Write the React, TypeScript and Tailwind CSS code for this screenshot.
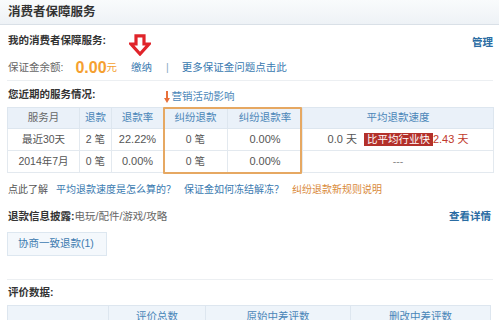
import React from 'react';

const monthRows = [
  { month: '最近30天', refund: '2 笔', rate: '22.22%', dispute: '0 笔', disputeRate: '0.00%', speed: true },
  { month: '2014年7月', refund: '0 笔', rate: '0.00%', dispute: '0 笔', disputeRate: '0.00%', speed: false },
];

function RedArrow() {
  return (
    <svg width="22" height="22" viewBox="0 0 22 22" className="absolute left-[129px] top-[9px]">
      <polygon
        points="7,1.8 15,1.8 15,10 20,10 11,20 2,10 7,10"
        fill="#ffffff"
        stroke="#e0242a"
        strokeWidth="3.2"
        strokeLinejoin="miter"
      />
    </svg>
  );
}

function SmallArrow() {
  return (
    <svg width="6" height="12" viewBox="0 0 6 12" className="mr-[2px]">
      <rect x="2" y="0" width="2" height="8" fill="#e8703a" />
      <polygon points="0,7 6,7 3,12" fill="#e8703a" />
    </svg>
  );
}

export default function App() {
  return (
    <div className="w-[499px] h-[320px] overflow-hidden bg-white text-[10.5px] text-[#666] font-['Liberation_Sans','Noto_Sans_CJK_SC',sans-serif]">
      {/* title bar */}
      <div className="h-[25px] border-b border-[#d9e0e7] bg-linear-to-b from-[#f9fbfc] to-[#eef2f6] flex items-center pl-2 text-[12.5px] font-bold text-[#333]">
        消费者保障服务
      </div>

      <div className="relative pl-[7px] pr-[6px]">
        <RedArrow />

        <div className="h-[31px] flex items-center justify-between pl-[1px]">
          <span className="font-bold text-[#333]">我的消费者保障服务:</span>
          <span className="font-bold text-[#2a6ca3] mt-[4px]">管理</span>
        </div>

        <div className="h-[25px] border-b border-[#eceff2] flex items-center pl-[1px]">
          <span className="text-[#666]">保证金余额:</span>
          <span className="ml-[12px] text-[16px] font-bold text-[#f5a030]">0.00</span>
          <span className="text-[#f5a030]">元</span>
          <a className="ml-[14px] text-[#3a7ab0]">缴纳</a>
          <span className="ml-[14px] text-[#8aa8c4]">|</span>
          <a className="ml-[13px] text-[#3a7ab0]">更多保证金问题点击此</a>
        </div>

        <div className="h-[26px] flex items-center pl-[1px] pt-[2px]">
          <span className="font-bold text-[#333]">您近期的服务情况:</span>
          <span className="ml-[68px] mt-[4px] flex items-center text-[#4a86b8]">
            <SmallArrow />
            营销活动影响
          </span>
        </div>

        {/* service table */}
        <div className="relative w-[486px]">
          <table className="w-[486px] table-fixed border-collapse text-center">
            <colgroup>
              <col className="w-[72px]" />
              <col className="w-[32px]" />
              <col className="w-[52px]" />
              <col className="w-[64px]" />
              <col className="w-[75px]" />
              <col className="w-[191px]" />
            </colgroup>
            <thead>
              <tr className="h-[21px] bg-[#eaf1f9]">
                <th className="border border-[#dde6ef] font-normal text-[#666]">服务月</th>
                <th className="border border-[#dde6ef] font-normal text-[#4a86b8]">退款</th>
                <th className="border border-[#dde6ef] font-normal text-[#4a86b8]">退款率</th>
                <th className="border border-[#dde6ef] font-normal text-[#4a86b8]">纠纷退款</th>
                <th className="border border-[#dde6ef] font-normal text-[#4a86b8]">纠纷退款率</th>
                <th className="border border-[#dde6ef] font-normal text-[#4a86b8]">平均退款速度</th>
              </tr>
            </thead>
            <tbody>
              {monthRows.map((r) => (
                <tr key={r.month} className="h-[22px]">
                  <td className="border border-[#e3e9ef] text-[#555]">{r.month}</td>
                  <td className="border border-[#e3e9ef] text-[#555]">{r.refund}</td>
                  <td className="border border-[#e3e9ef] text-[#555] text-[11px]">{r.rate}</td>
                  <td className="border border-[#e3e9ef] text-[#555]">{r.dispute}</td>
                  <td className="border border-[#e3e9ef] text-[#555] text-[11px]">{r.disputeRate}</td>
                  <td className="border border-[#e3e9ef] text-[#555]">
                    {r.speed ? (
                      <span className="inline-flex items-center">
                        <span className="text-[11px]">0.0 天</span>
                        <span className="ml-[7px] px-[3px] h-[13px] leading-[13px] bg-[#b3302a] text-white">比平均行业快</span>
                        <span className="text-[11px] text-[#c0392b]">2.43 天</span>
                      </span>
                    ) : (
                      <span className="text-[#888]">---</span>
                    )}
                  </td>
                </tr>
              ))}
            </tbody>
          </table>
          <div className="absolute left-[156px] top-0 w-[139px] h-[67px] border-2 border-[#e6a862] rounded-[1px]" />
        </div>

        <div className="h-[32px] flex items-center gap-[8px] pl-[1px] text-[10px]">
          <span className="text-[#555]">点此了解</span>
          <a className="text-[#3a7ab0]">平均退款速度是怎么算的？</a>
          <a className="text-[#3a7ab0]">保证金如何冻结解冻？</a>
          <a className="text-[#d9893a]">纠纷退款新规则说明</a>
        </div>

        <div className="h-[24px] flex items-center justify-between pl-[1px]">
          <span>
            <span className="font-bold text-[#333]">退款信息披露:</span>
            <span className="text-[#666]">电玩/配件/游戏/攻略</span>
          </span>
          <a className="font-bold text-[#2a6ca3] mr-[2px]">查看详情</a>
        </div>

        <div className="mt-[3px] w-[100px] h-[24px] border border-[#dde7f0] bg-[#f4f8fc] flex items-center pl-[10px] text-[#3d7bb0]">
          协商一致退款(1)
        </div>

        <div className="h-[24px] border-b border-[#eceff2]" />

        <div className="h-[25px] flex items-center pl-[1px]">
          <span className="font-bold text-[#333]">评价数据:</span>
        </div>

        {/* rating table */}
        <table className="w-[483px] table-fixed border-collapse text-center">
          <colgroup>
            <col className="w-[101px]" />
            <col className="w-[97px]" />
            <col className="w-[145px]" />
            <col className="w-[140px]" />
          </colgroup>
          <thead>
            <tr className="h-[22px] bg-[#eef4fa]">
              <th className="border border-[#dde6ef] font-normal text-[#4a86b8]"></th>
              <th className="border border-[#dde6ef] font-normal text-[#4a86b8]">评价总数</th>
              <th className="border border-[#dde6ef] font-normal text-[#4a86b8]">原始中差评数</th>
              <th className="border border-[#dde6ef] font-normal text-[#4a86b8]">删改中差评数</th>
            </tr>
          </thead>
        </table>
      </div>
    </div>
  );
}
